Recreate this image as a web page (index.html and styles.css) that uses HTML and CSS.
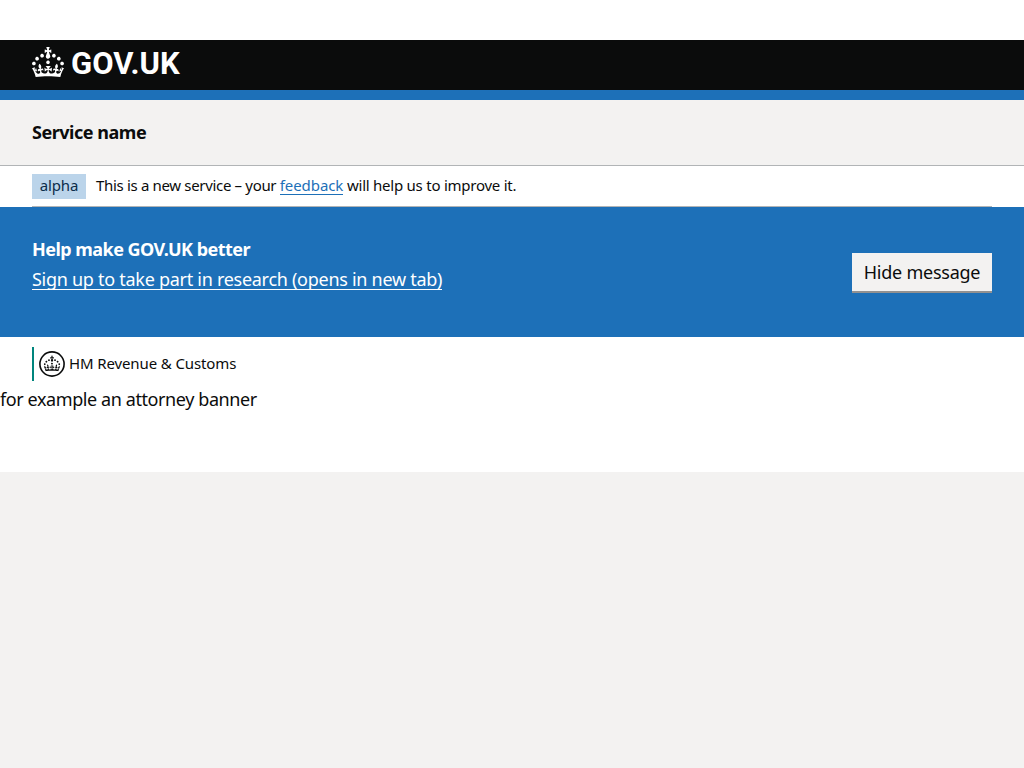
FILE: index.html
```html
<!DOCTYPE html>
<html lang="en">
<head>
<meta charset="utf-8">
<title>Service name - GOV.UK</title>
<link rel="stylesheet" href="styles.css">
</head>
<body>
<svg class="symbols" aria-hidden="true"><symbol id="crown" viewBox="0 0 32 30"><path d="M22.6 10.4c-1 .4-2-.1-2.4-1-.4-.9.1-2 1-2.4.9-.4 2 .1 2.4 1s-.1 2-1 2.4m4.9 3c-1 .4-2-.1-2.4-1-.4-.9.1-2 1-2.4.9-.4 2 .1 2.4 1s0 2-1 2.4m3.3 4.8c-1 .4-2-.1-2.4-1-.4-.9.1-2 1-2.4.9-.4 2 .1 2.4 1s-.1 2-1 2.4M16.7 17.1c-.9.4-2-.1-2.4-1-.4-.9.1-2 1-2.4.9-.4 2 .1 2.4 1s-.1 2-1 2.4M17 4.7l2.3 1.2V2.5l-2.3.7-.2-.2.9-3h-3.4l.9 3-.2.2c-.1.1-2.3-.7-2.3-.7v3.4L15 4.7c.1.1.1.2.2.2l-1.3 4c-.1.2-.1.4-.1.6 0 1.1.8 2 1.9 2.2h.7c1-.2 1.9-1.1 1.9-2.1 0-.2 0-.4-.1-.6l-1.3-4c-.1-.2 0-.2.1-.3m-7.6 5.7c.9.4 2-.1 2.4-1 .4-.9-.1-2-1-2.4-.9-.4-2 .1-2.4 1s0 2 1 2.4m-5 3c.9.4 2-.1 2.4-1 .4-.9-.1-2-1-2.4-.9-.4-2 .1-2.4 1s.1 2 1 2.4m-3.2 4.8c.9.4 2-.1 2.4-1 .4-.9-.1-2-1-2.4-.9-.4-2 .1-2.4 1s0 2 1 2.4m14.8 11c4.4 0 8.6.3 12.3.8 1.1-4.5 2.4-7 3.7-8.8l-2.5-.9c.2 1.3.3 1.9 0 2.7-.4-.4-.8-1.1-1.1-2.3l-1.2 4c.7-.5 1.3-.8 2-.9-1.1 2.5-2.6 3.1-3.5 3-1.1-.2-1.7-1.2-1.5-2.1.3-1.2 1.5-1.5 2.1-.1 1.1-2.3-.8-3-2-2.3 1.9-1.9 2.1-3.5.6-5.6-2.1 1.6-2.1 3.2-1.2 5.5-1.2-1.4-3.2-.6-2.5 1.6.9-1.4 2.1-.5 1.9.8-.2 1.1-1.7 2.1-3.5 1.9-2.7-.2-2.9-2.1-2.9-3.6.7-.1 1.9.5 2.9 1.9l.4-4.3c-1.1 1.1-2.1 1.4-3.2 1.4.4-1.2 2.1-3 2.1-3h-5.4s1.7 1.9 2.1 3c-1.1 0-2.1-.2-3.2-1.4l.4 4.3c1-1.4 2.2-2 2.9-1.9-.1 1.5-.2 3.4-2.9 3.6-1.9.2-3.4-.8-3.5-1.9-.2-1.3 1-2.2 1.9-.8.7-2.3-1.2-3-2.5-1.6.9-2.2.9-3.9-1.2-5.5-1.5 2-1.3 3.7.6 5.6-1.2-.7-3.1 0-2 2.3.6-1.4 1.8-1.1 2.1.1.2.9-.3 1.9-1.5 2.1-.9.2-2.4-.5-3.5-3 .6 0 1.2.3 2 .9l-1.2-4c-.3 1.1-.7 1.9-1.1 2.3-.3-.8-.2-1.4 0-2.7l-2.9.9C1.3 23 2.6 25.5 3.7 30c3.7-.5 7.9-.8 12.3-.8"/></symbol></svg>
<div class="page">
<header class="header">
<svg class="header-crown"><use href="#crown"/></svg>
<span class="logotype">GOV.UK</span>
</header>
<div class="service"><a class="service-name">Service name</a></div>
<div class="container"><div class="phase">
<strong class="tag"><span class="tag-text">alpha</span></strong>
<span class="phase-text">This is a new service – your <a class="feedback">feedback</a><span class="phase-end"> will help us to improve it.</span></span>
</div></div>
<section class="research">
<div>
<h2 class="research-title">Help make GOV.UK better</h2>
<a class="research-link">Sign up to take part in research (opens in new tab)</a>
</div>
<button class="hide">Hide message</button>
</section>
<div class="container"><div class="organisation">
<svg class="roundel" viewBox="0 0 26 26"><circle class="roundel-ring" cx="13" cy="13" r="12.1"/><use href="#crown" x="4.7" y="4.6" width="16.6" height="15.6"/></svg>
<span class="organisation-name">HM Revenue &amp; Customs</span>
</div></div>
<div class="attorney"><span class="attorney-text">for example an attorney banner</span></div>
</div>
</body>
</html>
```
FILE: styles.css
```css
* { box-sizing: border-box; }
body { margin: 0; background: #f3f2f1; color: #0b0c0c; font-family: "Noto Sans", "Open Sans", sans-serif; font-size: 18px; }
.symbols { display: none; }
.page { height: 472px; padding-top: 40px; background: #fff; white-space: nowrap; }
.header { display: flex; height: 60px; padding: 7px 32px 0; background: #0b0c0c; border-bottom: 10px solid #1d70b8; color: #fff; }
.header-crown { width: 32px; height: 30px; fill: currentColor; }
.logotype { margin-left: 7px; font-family: Roboto, sans-serif; font-size: 31px; line-height: 34px; font-weight: 700; letter-spacing: .1px; }
.service { display: flex; align-items: center; height: 66px; padding: 0 32px 2px; background: #f3f2f1; border-bottom: 1px solid #b1b4b6; }
.service-name { font-size: 18px; font-weight: 700; letter-spacing: -.47px; }
.container { padding: 0 32px; }
.phase { display: flex; align-items: center; height: 41px; border-bottom: 1px solid #b1b4b6; }
.tag { display: flex; align-items: center; justify-content: center; width: 54px; height: 25px; margin-right: 10px; padding-bottom: 2px; background: #bbd4ea; color: #0c2d4a; font-size: 15px; font-weight: 400; letter-spacing: -.1px; }
.phase-text { padding-bottom: 2px; font-size: 15px; letter-spacing: -.33px; }
.phase-end { letter-spacing: -.24px; }
.feedback { display: inline-block; border-bottom: 1px solid; color: #1d70b8; line-height: 17px; letter-spacing: -.08px; }
.research { display: flex; justify-content: space-between; height: 130px; padding: 27px 32px 0; background: #1d70b8; color: #fff; }
.research-title { margin: 0 0 5px; font-size: 18px; line-height: 30px; font-weight: 700; letter-spacing: -.53px; }
.research-link { display: block; height: 21px; line-height: 21px; border-bottom: 1px solid; letter-spacing: -.28px; }
.hide { width: 140px; height: 40px; margin-top: 19px; padding: 0 0 1px; border: 0; border-bottom: 2px solid #929191; background: #f3f2f1; color: #0b0c0c; font: inherit; letter-spacing: -.25px; }
.organisation { display: flex; align-items: center; height: 34px; margin-top: 10px; padding-left: 5px; border-left: 2px solid #00857d; }
.roundel { flex: none; width: 26px; height: 26px; margin-right: 4px; fill: #0b0c0c; }
.roundel-ring { fill: none; stroke: #0b0c0c; stroke-width: 1.6; }
.organisation-name { padding-bottom: 2px; font-size: 15px; letter-spacing: -.12px; }
.attorney { margin-top: 6px; line-height: 25px; letter-spacing: -.41px; }
```
